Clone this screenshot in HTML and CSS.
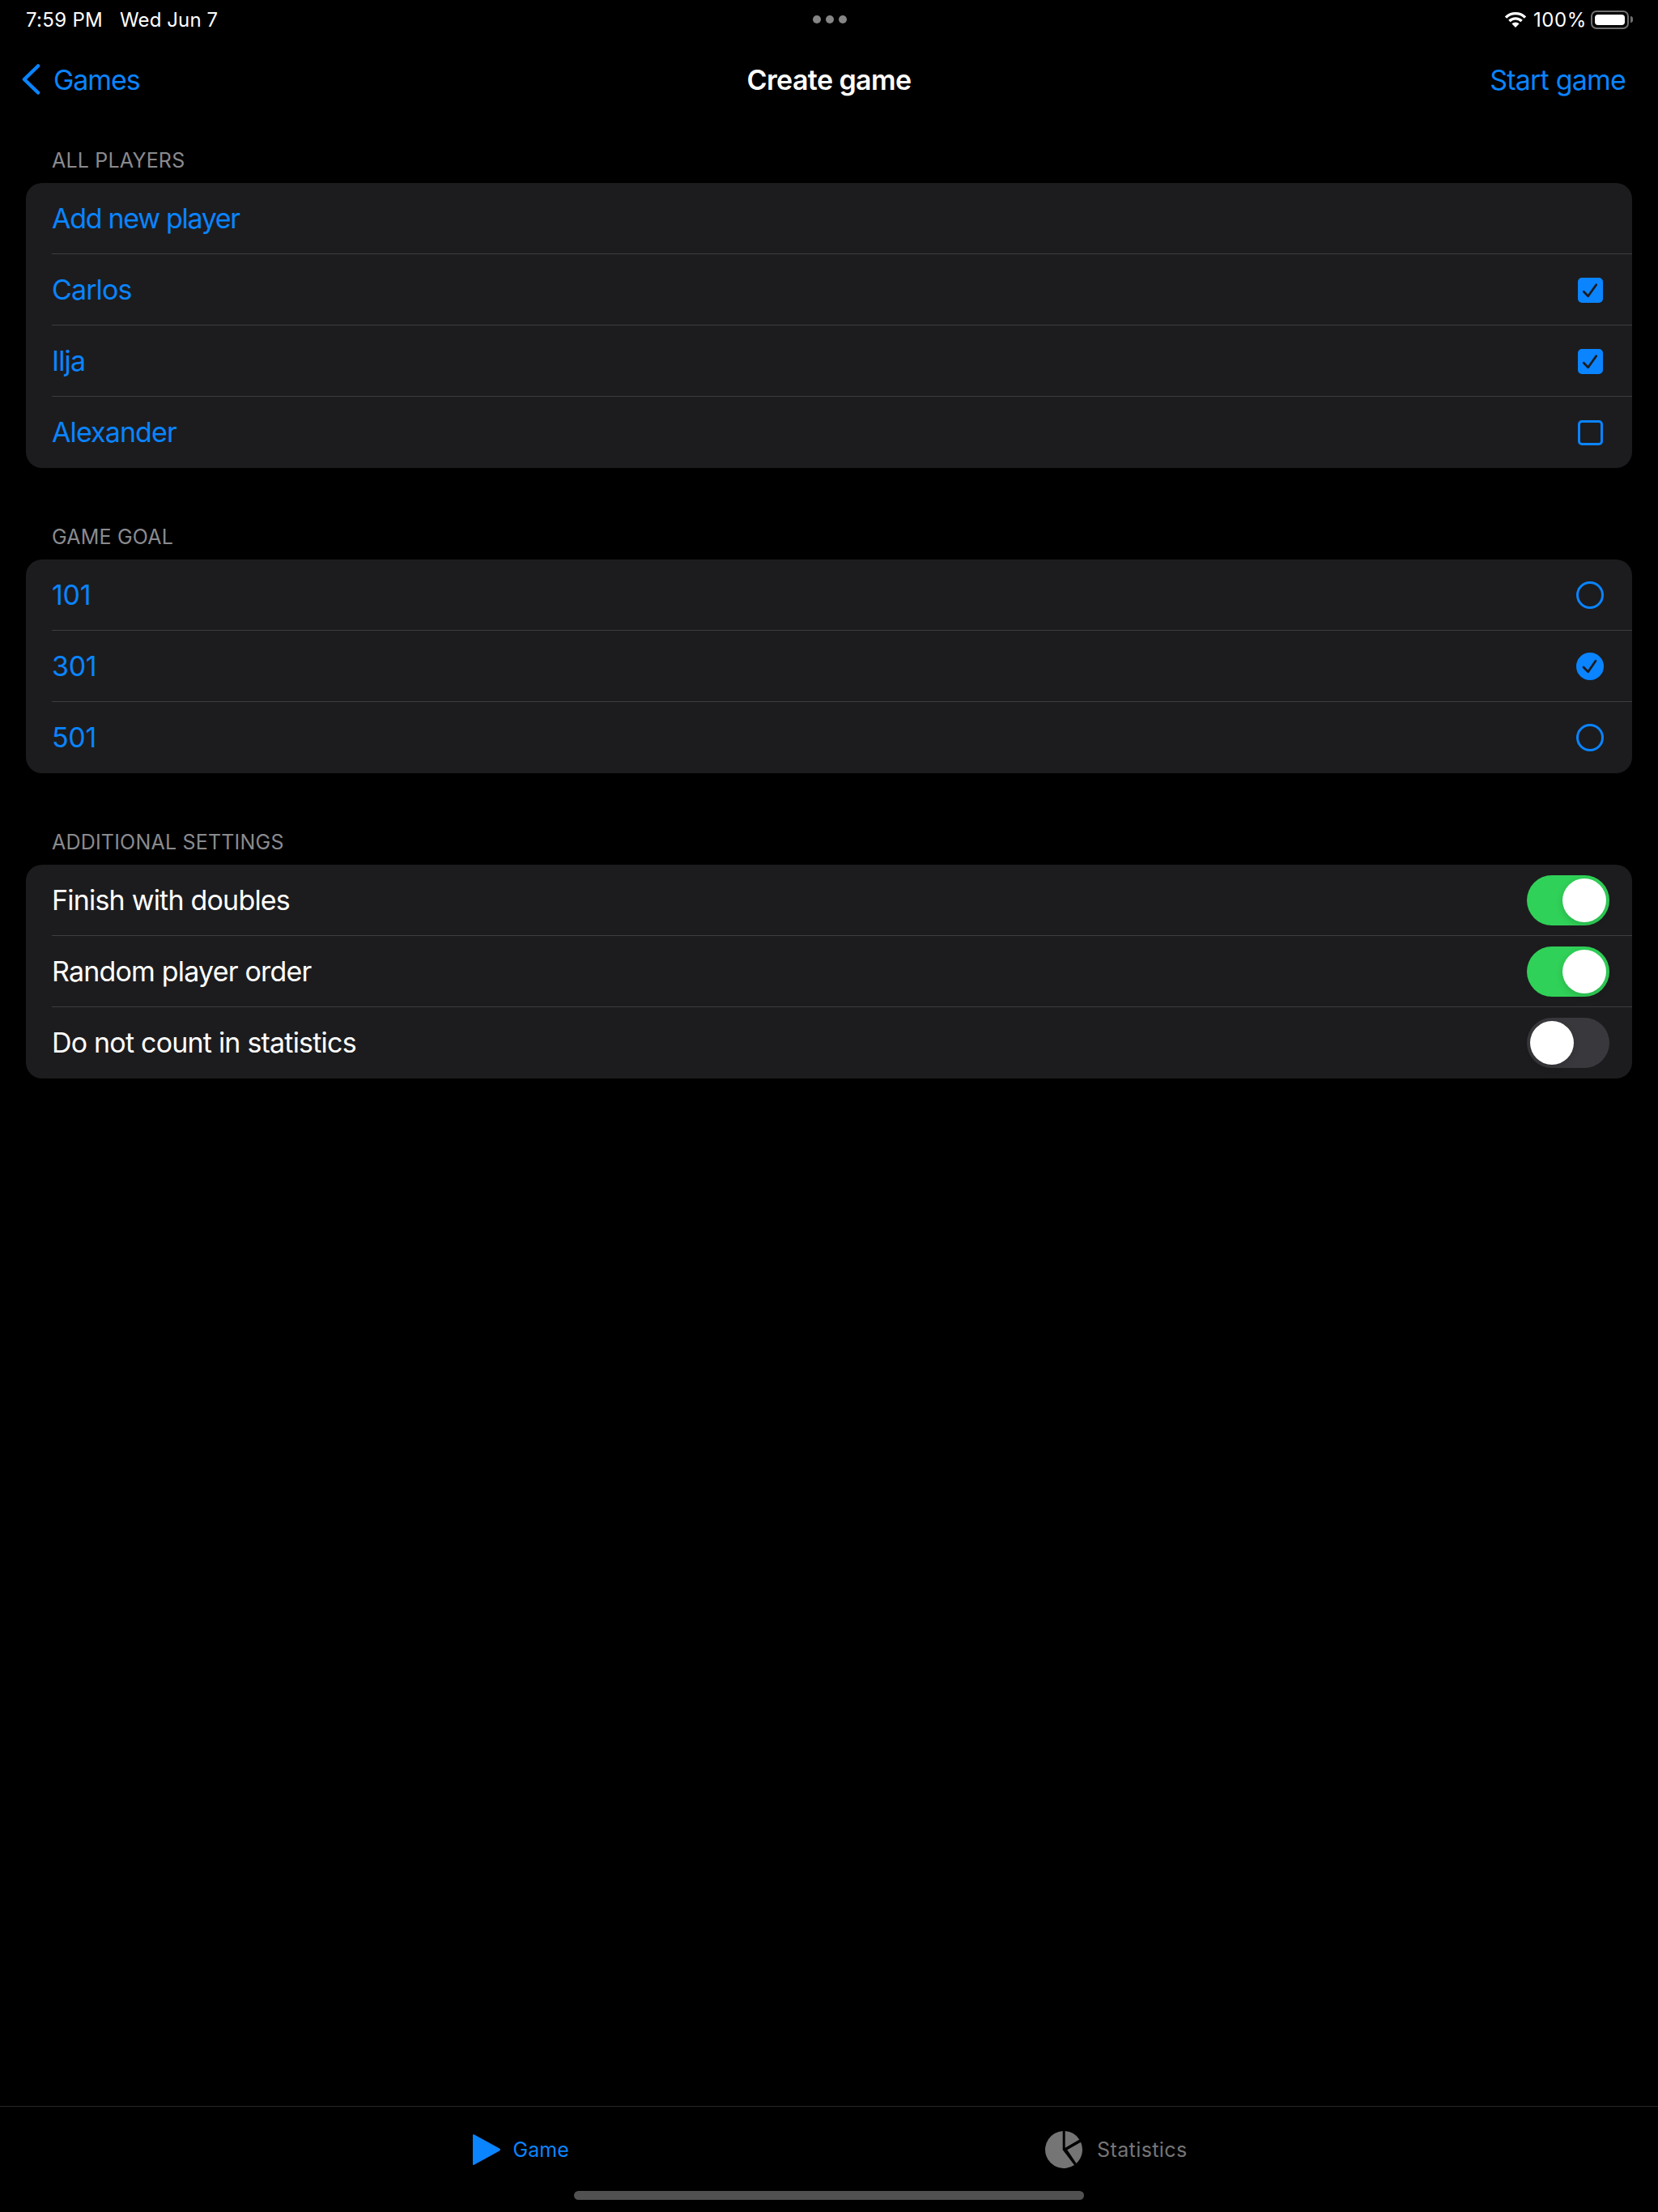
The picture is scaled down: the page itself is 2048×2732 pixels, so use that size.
FILE: index.html
```html
<!DOCTYPE html>
<html lang="en">
<head>
  <meta charset="UTF-8" />
  <title>Create game</title>
  <meta name="viewport" content="width=device-width, initial-scale=1.0" />
  <link rel="stylesheet" href="styles.css">
</head>
<body>
  <div class="page">
    <!-- Status bar -->
    <div class="status-bar">
      <div class="status-left">
        <span>7:59 PM</span>
        <span class="status-date">Wed Jun 7</span>
      </div>
      <div class="status-dots">
        <span class="dot"></span>
        <span class="dot"></span>
        <span class="dot"></span>
      </div>
      <div class="status-right">
        <svg class="wifi" width="28" height="20" viewBox="0 0 28 20">
          <path d="M14 20l-4.600-4.700a6.600 6.600 0 0 1 9.200 0z" fill="#fff"/>
          <path d="M2 7.600a17 17 0 0 1 24 0M6.400 12a10.800 10.800 0 0 1 15.200 0" fill="none" stroke="#fff" stroke-width="3.400"/>
        </svg>
        <span class="battery-text">100%</span>
        <div class="battery">
          <div class="battery-fill"></div>
        </div>
        <span class="battery-cap"></span>
      </div>
    </div>

    <!-- Nav bar -->
    <div class="nav-bar">
      <div class="nav-back">
        <svg width="24" height="40" viewBox="0 0 24 40">
          <path d="M21 3.500L4 20L21 36.500" fill="none" stroke="#0a84ff" stroke-width="4.500" stroke-linecap="round" stroke-linejoin="round"/>
        </svg>
        <span>Games</span>
      </div>
      <div class="nav-title">Create game</div>
      <div class="nav-action">Start game</div>
    </div>

    <!-- All players -->
    <div class="section-label">ALL PLAYERS</div>
    <div class="card">
      <div class="row"><span class="link add-link">Add new player</span></div>
      <div class="row">
        <span class="link">Carlos</span>
        <span class="check-box checked">
          <svg width="31" height="31" viewBox="0 0 31 31"><path d="M7.300 17.300L12.700 22.700L22.700 8.700" fill="none" stroke="#1c1c1e" stroke-width="2.800" stroke-linecap="round" stroke-linejoin="round"/></svg>
        </span>
      </div>
      <div class="row">
        <span class="link">Ilja</span>
        <span class="check-box checked">
          <svg width="31" height="31" viewBox="0 0 31 31"><path d="M7.300 17.300L12.700 22.700L22.700 8.700" fill="none" stroke="#1c1c1e" stroke-width="2.800" stroke-linecap="round" stroke-linejoin="round"/></svg>
        </span>
      </div>
      <div class="row">
        <span class="link">Alexander</span>
        <span class="check-box"></span>
      </div>
    </div>

    <!-- Game goal -->
    <div class="section-label spaced">GAME GOAL</div>
    <div class="card">
      <div class="row">
        <span class="link goal">101</span>
        <span class="radio"></span>
      </div>
      <div class="row">
        <span class="link goal">301</span>
        <span class="radio checked">
          <svg width="34" height="34" viewBox="0 0 34 34"><path d="M9 18L14.700 23.700L24 10.300" fill="none" stroke="#1c1c1e" stroke-width="2.800" stroke-linecap="round" stroke-linejoin="round"/></svg>
        </span>
      </div>
      <div class="row">
        <span class="link goal">501</span>
        <span class="radio"></span>
      </div>
    </div>

    <!-- Additional settings -->
    <div class="section-label spaced">ADDITIONAL SETTINGS</div>
    <div class="card">
      <div class="row toggle-row">
        <span>Finish with doubles</span>
        <span class="toggle on"><span class="knob"></span></span>
      </div>
      <div class="row toggle-row">
        <span>Random player order</span>
        <span class="toggle on"><span class="knob"></span></span>
      </div>
      <div class="row toggle-row">
        <span>Do not count in statistics</span>
        <span class="toggle"><span class="knob"></span></span>
      </div>
    </div>

    <!-- Tab bar -->
    <div class="tab-bar">
      <div class="tab-items">
        <div class="tab active">
          <svg width="36" height="40" viewBox="0 0 36 40"><path d="M1 2.500Q1 0 3 1.500L34 18.500Q36 20 34 21.500L3 38.500Q1 40 1 37.500z" fill="#0a84ff"/></svg>
          <span>Game</span>
        </div>
        <div class="tab stats">
          <svg width="46" height="46" viewBox="0 0 46 46">
            <path d="M21.700 0.040V23.300L36 42A23 23 0 1 1 21.700 0.040z" fill="#757575"/>
            <path d="M24.700 0.060A23 23 0 0 1 42.300 10.500L24.700 20.700z" fill="#757575"/>
            <path d="M44 13.700A23 23 0 0 1 38.500 40L27.300 23.300z" fill="#757575"/>
          </svg>
          <span>Statistics</span>
        </div>
      </div>
      <div class="home-indicator"></div>
    </div>
  </div>
</body>
</html>
```

FILE: styles.css
```css
* {
  box-sizing: border-box;
}

body {
  margin: 0;
  font-family: "Inter", "Liberation Sans", sans-serif;
  background-color: #000;
  color: #fff;
}

.page {
  display: flex;
  flex-direction: column;
  height: 100vh;
}

/* ========= STATUS BAR ========= */
.status-bar {
  display: grid;
  grid-template-columns: 1fr auto 1fr;
  align-items: center;
  height: 48px;
  padding: 0 31px 0 32px;
  font-size: 24px;
  letter-spacing: 0.3px;
}

.status-left {
  display: flex;
  gap: 21px;
}

.status-date {
  letter-spacing: 0.1px;
}

.status-dots {
  display: flex;
  gap: 6px;
}

.dot {
  width: 10px;
  height: 10px;
  border-radius: 50%;
  background-color: #858585;
}

.status-right {
  display: flex;
  align-items: center;
  justify-content: flex-end;
  gap: 8px;
}

.battery-text {
  letter-spacing: 0.6px;
}

.battery {
  width: 47px;
  height: 23px;
  padding: 3px;
  margin-left: -3px;
  border: 2px solid #6f6f6f;
  border-radius: 7px;
}

.battery-fill {
  height: 100%;
  background-color: #fff;
  border-radius: 4px;
}

.battery-cap {
  width: 3px;
  height: 8px;
  margin-left: -6px;
  background-color: #6f6f6f;
  border-radius: 0 3px 3px 0;
}

/* ========= NAV BAR ========= */
.nav-bar {
  display: grid;
  grid-template-columns: 1fr auto 1fr;
  align-items: center;
  height: 100px;
  padding: 0 40px;
  font-size: 34px;
  letter-spacing: -0.8px;
}

.nav-back {
  display: flex;
  align-items: center;
  gap: 16px;
  margin-left: -14px;
  letter-spacing: -1.1px;
  color: #0a84ff;
}

.nav-title {
  font-weight: 600;
  letter-spacing: -0.6px;
}

.nav-action {
  text-align: right;
  color: #0a84ff;
}

/* ========= LIST ========= */
.section-label {
  display: flex;
  align-items: flex-end;
  height: 78px;
  padding: 0 0 13px 64px;
  font-size: 25px;
  letter-spacing: 0.2px;
  color: #8a8a8e;
}

.section-label.spaced {
  margin-top: 35px;
}

.card {
  margin: 0 32px;
  background-color: #1c1c1e;
  border-radius: 20px;
  overflow: hidden;
}

.row {
  display: flex;
  align-items: center;
  justify-content: space-between;
  height: 88px;
  margin-left: 32px;
  padding-right: 35px;
  font-size: 34px;
  letter-spacing: -0.9px;
  border-bottom: 1px solid #3d3d40;
}

.row:last-child {
  border-bottom-color: transparent;
}

.toggle-row {
  padding-right: 28px;
  letter-spacing: -0.8px;
}

.link {
  color: #0a84ff;
}

.add-link {
  letter-spacing: -1.3px;
}

.goal {
  letter-spacing: -0.3px;
}

.check-box {
  width: 31px;
  height: 31px;
  margin: 2px 1px 0 0;
  border: 3px solid #0a84ff;
  border-radius: 5px;
}

.check-box svg {
  display: block;
  margin: -3px;
}

.check-box.checked {
  background-color: #0a84ff;
}

.radio {
  width: 34px;
  height: 34px;
  border: 3px solid #0a84ff;
  border-radius: 50%;
}

.radio svg {
  display: block;
  margin: -3px;
}

.radio.checked {
  background-color: #0a84ff;
}

.toggle {
  display: flex;
  width: 102px;
  height: 62px;
  padding: 4px;
  background-color: #39393d;
  border-radius: 31px;
}

.toggle.on {
  justify-content: flex-end;
  background-color: #30d158;
}

.knob {
  width: 54px;
  height: 54px;
  background-color: #fff;
  border-radius: 50%;
  box-shadow: 0 3px 8px rgba(0, 0, 0, 0.15);
}

/* ========= TAB BAR ========= */
.tab-bar {
  display: flex;
  flex-direction: column;
  align-items: center;
  height: 131px;
  margin-top: auto;
  border-top: 1px solid #262628;
}

.tab-items {
  display: flex;
  justify-content: center;
  align-items: center;
  gap: 588px;
  height: 104px;
  padding: 2px 0 0 2px;
}

.tab {
  display: flex;
  align-items: center;
  gap: 14px;
  font-size: 25px;
  letter-spacing: 0.4px;
  color: #757575;
}

.tab.stats {
  gap: 18px;
}

.tab.active {
  letter-spacing: 0.1px;
  color: #0a84ff;
}

.home-indicator {
  width: 630px;
  height: 11px;
  background-color: #515151;
  border-radius: 6px;
}
```
